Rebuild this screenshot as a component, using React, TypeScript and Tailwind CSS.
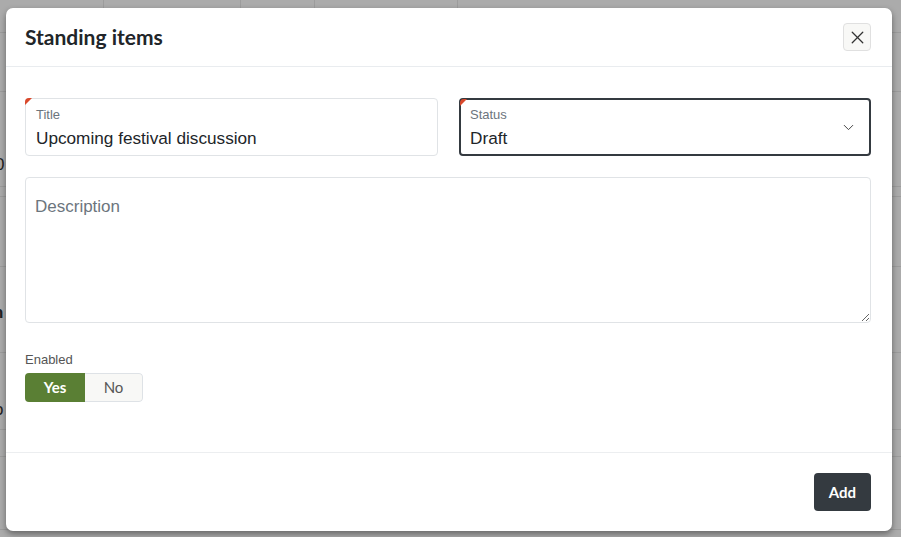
import { useState } from "react";
import { X, ChevronDown } from "lucide-react";

const rowHeights = [59, 95, 10, 70, 86, 77, 27, 73];

const Corner = () => (
  <span className="absolute left-[-1px] top-[-1px] h-0 w-0 border-t-[7px] border-r-[7px] border-t-[#d9482b] border-r-transparent rounded-tl-[4px]" />
);

const Backdrop = () => (
  <div className="absolute inset-0 flex flex-col bg-[#ababab] text-[17px] text-[#222]">
    <div className="flex h-[33px] border-b border-[#9c9c9c]">
      <div className="w-[104px] border-r border-[#9c9c9c]" />
      <div className="w-[137px] border-r border-[#9c9c9c]" />
      <div className="w-[74px] border-r border-[#9c9c9c]" />
      <div className="w-[143px] border-r border-[#9c9c9c]" />
    </div>
    {rowHeights.map((h, i) => (
      <div key={i} className="border-b border-[#9c9c9c]" style={{ height: h }} />
    ))}
    <span className="absolute left-[-5px] top-[152px]">0</span>
    <span className="absolute left-[-7px] top-[300px] font-bold">n</span>
    <span className="absolute left-[-6px] top-[397px]">o</span>
  </div>
);

export default function App() {
  const [enabled, setEnabled] = useState(true);

  return (
    <div className="relative h-[537px] w-[901px] overflow-hidden [font-family:'Liberation_Sans',Arial,sans-serif]">
      <Backdrop />
      <div className="absolute inset-0 pl-[6px] pt-[8px]">
        <div className="flex h-[523px] w-[886px] flex-col rounded-[7px] bg-white shadow-[0_3px_6px_rgba(0,0,0,0.4)]">
          <div className="flex h-[59px] items-center justify-between border-b border-[#e9ecef] pl-[19px] pr-[21px]">
            <h2 className="text-[21px] font-bold text-[#212529] [font-family:Lato,sans-serif]">Standing items</h2>
            <button className="flex h-[28px] w-[28px] items-center justify-center rounded-[4px] border border-[#e0e0e0] bg-[#f8f8f6] text-[#333]">
              <X size={21} strokeWidth={1.5} />
            </button>
          </div>

          <div className="flex flex-1 flex-col pl-[19px] pr-[21px] pt-[31px]">
            <div className="flex gap-[21px]">
              <div className="relative h-[58px] w-[413px] rounded-[4px] border border-[#e0e3e6] px-[10px] pt-[8px]">
                <Corner />
                <div className="text-[13px] leading-[16px] text-[#6c757d]">Title</div>
                <div className="mt-[4px] text-[17.2px] leading-[22px] text-[#212529]">Upcoming festival discussion</div>
              </div>
              <div className="relative flex h-[58px] flex-1 items-center justify-between rounded-[4px] border-2 border-[#343a40] pl-[9px] pr-[12px]">
                <Corner />
                <div className="pt-[2px]">
                  <div className="text-[13px] leading-[16px] text-[#6c757d]">Status</div>
                  <div className="mt-[4px] text-[17.2px] leading-[22px] text-[#212529]">Draft</div>
                </div>
                <ChevronDown size={17} strokeWidth={1.4} className="text-[#444]" />
              </div>
            </div>

            <textarea
              placeholder="Description"
              className="mt-[21px] h-[146px] w-full rounded-[4px] border border-[#e0e3e6] px-[9px] pt-[18px] text-[17px] leading-[22px] text-[#212529] outline-none placeholder:text-[#6c757d]"
            />

            <div className="mt-[29px] text-[13px] leading-[16px] text-[#555]">Enabled</div>
            <div className="mt-[5px] flex h-[29px] w-[118px] overflow-hidden rounded-[4px] text-[15px] [font-family:Lato,sans-serif]">
              <button
                onClick={() => setEnabled(true)}
                className={
                  enabled
                    ? "w-[60px] bg-[#5a7f34] font-bold text-white"
                    : "w-[60px] border border-[#dee2e6] bg-[#f8f8f6] text-[#555]"
                }
              >
                Yes
              </button>
              <button
                onClick={() => setEnabled(false)}
                className={
                  !enabled
                    ? "flex-1 bg-[#5a7f34] font-bold text-white"
                    : "flex-1 rounded-r-[4px] border border-l-0 border-[#dee2e6] bg-[#f8f8f6] text-[#555]"
                }
              >
                No
              </button>
            </div>
          </div>

          <div className="flex h-[79px] justify-end border-t border-[#eceef0] pr-[21px] pt-[20px]">
            <button className="h-[38px] w-[57px] rounded-[4px] bg-[#343a40] text-[15px] font-bold text-white [font-family:Lato,sans-serif]">
              Add
            </button>
          </div>
        </div>
      </div>
    </div>
  );
}
